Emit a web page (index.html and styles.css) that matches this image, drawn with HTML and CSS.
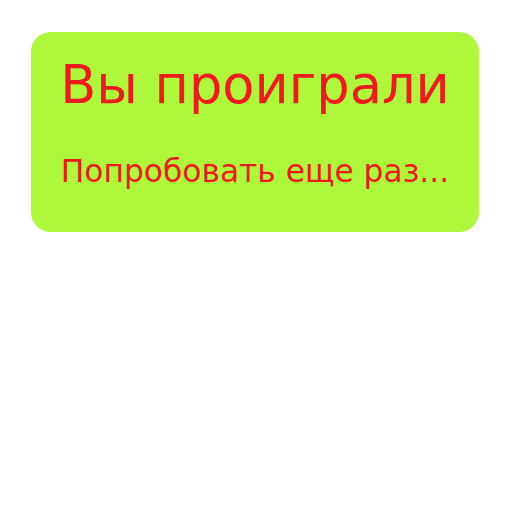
FILE: index.html
```html
<!DOCTYPE html>
<html lang="ru">
<head>
<meta charset="utf-8">
<link rel="stylesheet" href="styles.css">
</head>
<body>
<div class="card">
  <h1 class="title">Вы проиграли</h1>
  <p class="retry">Попробовать еще раз...</p>
</div>
</body>
</html>
```
FILE: styles.css
```css
html, body {
  margin: 0;
  padding: 0;
  background: #ffffff;
}
body {
  padding: 32px 33px 0 31px;
  font-family: "DejaVu Sans", sans-serif;
}
.card {
  width: 448px;
  height: 200px;
  box-sizing: border-box;
  background: #adf83b;
  border-radius: 20px;
  color: #f01a1a;
  text-align: center;
  display: flex;
  flex-direction: column;
  align-items: center;
}
.title {
  margin: 0;
  font-size: 52.6px;
  font-weight: normal;
  line-height: 1;
  padding-top: 26.5px;
}
.retry {
  margin: 0;
  font-size: 31.3px;
  line-height: 1;
  padding-top: 45px;
}
```
